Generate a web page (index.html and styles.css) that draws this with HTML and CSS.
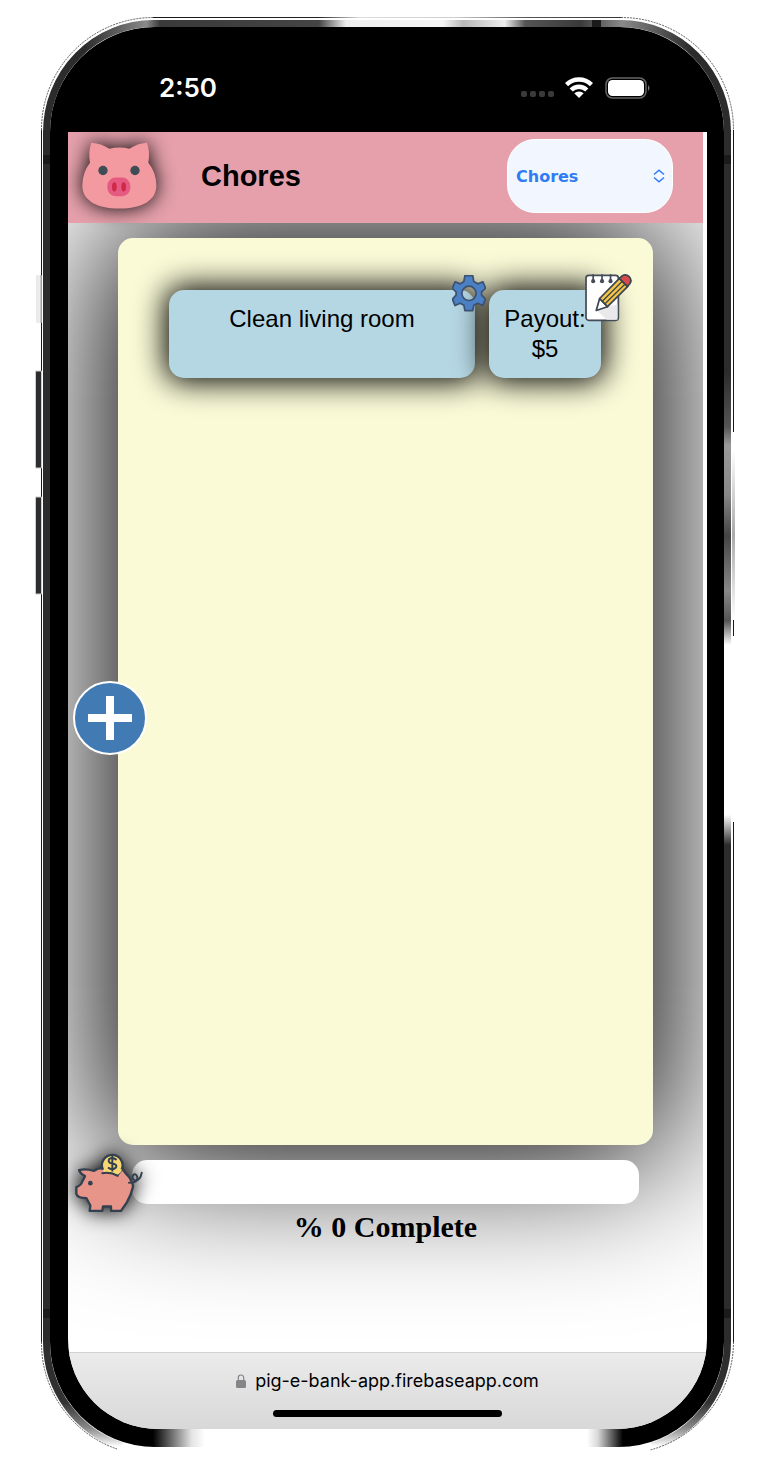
FILE: index.html
```html
<!DOCTYPE html>
<html lang="en">
<head>
<meta charset="utf-8">
<title>Chores</title>
<link rel="stylesheet" href="styles.css">
</head>
<body>
<div class="phone">
  <svg class="phone-frame" viewBox="35 10 704 1449" preserveAspectRatio="none" aria-hidden="true">
    <defs>
      <linearGradient id="topBand" gradientUnits="userSpaceOnUse" x1="43" y1="0" x2="732" y2="0">
        <stop offset="0" stop-color="#2c2c2c"/><stop offset=".06" stop-color="#2c2c2c"/><stop offset=".15" stop-color="#8a8a8a"/><stop offset=".17" stop-color="#3a3a3a"/><stop offset=".4" stop-color="#444"/><stop offset=".44" stop-color="#eee"/><stop offset=".58" stop-color="#f4f4f4"/><stop offset=".61" stop-color="#b8b8b8"/><stop offset=".67" stop-color="#eee"/><stop offset=".7" stop-color="#555"/><stop offset=".78" stop-color="#3a3a3a"/><stop offset=".84" stop-color="#8a8a8a"/><stop offset=".94" stop-color="#2c2c2c"/><stop offset="1" stop-color="#2c2c2c"/>
      </linearGradient>
      <linearGradient id="rightBand" gradientUnits="userSpaceOnUse" x1="0" y1="130" x2="0" y2="1342">
        <stop offset="0" stop-color="#2c2c2c"/><stop offset=".2" stop-color="#2c2c2c"/><stop offset=".245" stop-color="#555"/><stop offset=".26" stop-color="#999"/><stop offset=".3" stop-color="#888"/><stop offset=".335" stop-color="#444"/><stop offset=".38" stop-color="#888"/><stop offset=".405" stop-color="#555"/><stop offset=".425" stop-color="#fff"/><stop offset=".565" stop-color="#fff"/><stop offset=".59" stop-color="#2c2c2c"/><stop offset="1" stop-color="#2c2c2c"/>
      </linearGradient>
      <linearGradient id="lowBand" gradientUnits="userSpaceOnUse" x1="0" y1="1342" x2="0" y2="1452">
        <stop offset="0" stop-color="#2c2c2c"/><stop offset=".55" stop-color="#333"/><stop offset=".78" stop-color="#888"/><stop offset=".95" stop-color="#fff"/>
      </linearGradient>
      <linearGradient id="rimTop" gradientUnits="userSpaceOnUse" x1="41" y1="0" x2="734" y2="0">
        <stop offset="0" stop-color="#111"/><stop offset=".4" stop-color="#222"/><stop offset=".46" stop-color="#ddd"/><stop offset=".6" stop-color="#ccc"/><stop offset=".7" stop-color="#555"/><stop offset="1" stop-color="#111"/>
      </linearGradient>
      <linearGradient id="fadeLeft"><stop offset="0" stop-color="#fff" stop-opacity="0"/><stop offset=".75" stop-color="#fff" stop-opacity=".9"/><stop offset="1" stop-color="#fff"/></linearGradient>
      <linearGradient id="fadeRight"><stop offset="0" stop-color="#fff"/><stop offset=".3" stop-color="#fff" stop-opacity=".85"/><stop offset="1" stop-color="#fff" stop-opacity="0"/></linearGradient>
      <linearGradient id="mute" x1="0" x2="1"><stop offset="0" stop-color="#e8e8e8"/><stop offset=".6" stop-color="#eee"/><stop offset="1" stop-color="#888"/></linearGradient>
      <linearGradient id="sideGlow" x1="0" y1="0" x2="0" y2="1"><stop offset="0" stop-color="#fff"/><stop offset=".5" stop-color="#aaa"/><stop offset="1" stop-color="#fff"/></linearGradient>
    </defs>
    <rect x="50" y="27" width="674" height="1420" rx="105"/>
    <g fill="none" stroke-width="7">
      <path d="M46.500 132V1342" stroke="#2c2c2c"/>
      <path d="M727.500 130V1342.010L727.600 1342" stroke="url(#rightBand)"/>
      <path d="M46.500 132A107 109 0 0 1 153 23.500H621A107 109 0 0 1 727.500 132" stroke="url(#topBand)"/>
      <path d="M46.500 1342A107 109 0 0 0 122 1446M727.500 1342A107 109 0 0 1 652 1446" stroke="url(#lowBand)"/>
    </g>
    <path d="M41.500 130V1342M733.500 130V432M733.500 620V636M733.500 822V1342" fill="none" stroke="#1a1a1a"/>
    <path d="M153 17.500H621" fill="none" stroke="url(#rimTop)"/>
    <path d="M41.500 130A112 112 0 0 1 153 17.500M621 17.500A112 112 0 0 1 733.500 130M41.500 1342A112 112 0 0 0 117 1449M733.500 1342A112 112 0 0 1 650 1450" fill="none" stroke="#333" stroke-width=".8" stroke-dasharray="2 1"/>
    <path d="M43 155h7v9h-7zM43 1309h7v9h-7zM724 155h7v9h-7zM724 1309h7v9h-7zM592 20h9v7h-9z" fill="#1b1b1b"/>
    <rect x="732" y="450" width="3" height="170" fill="url(#sideGlow)"/>
    <rect x="36" y="275" width="6" height="48" rx="1" fill="url(#mute)"/>
    <path d="M35.500 371h6v97h-6zM35.500 497h6v97h-6z" fill="#2b2d2e" stroke="#ccc"/>
    <rect x="153" y="1429" width="52" height="27" fill="url(#fadeLeft)"/>
    <rect x="205" y="1429" width="382" height="27" fill="#fff"/>
    <rect x="587" y="1429" width="36" height="27" fill="url(#fadeRight)"/>
  </svg>

  <div class="status-bar">
    <span class="clock">2:50</span>
    <div class="indicators">
      <svg width="33" height="6" viewBox="0 0 33 6" fill="#3a3a3a" aria-hidden="true"><rect width="6" height="6" rx="2"/><rect x="9" width="6" height="6" rx="2"/><rect x="18" width="6" height="6" rx="2"/><rect x="27" width="6" height="6" rx="2"/></svg>
      <svg class="wifi" width="28" height="21" viewBox="0 0 28 21" fill="none" stroke="#fff" stroke-width="4.500" aria-hidden="true"><path d="M1.500 7.600A18 18 0 0 1 26.500 7.600"/><path d="M6.200 13A11 11 0 0 1 21.800 13"/><path d="M14 21L9.300 16.200A7 7 0 0 1 18.700 16.200Z" fill="#fff" stroke="none"/></svg>
      <svg class="battery" width="46" height="22" viewBox="0 0 46 22" aria-hidden="true"><rect x="1" y="1" width="40" height="20" rx="6.500" fill="none" stroke="#666" stroke-width="1.500"/><rect x="3" y="3" width="36" height="16" rx="4.500" fill="#fff"/><path d="M43 8q3 3 0 6z" fill="#777"/></svg>
    </div>
  </div>

  <div class="screen">
    <div class="app">
      <header class="app-header">
        <svg class="logo" viewBox="0 0 225 200" role="img" aria-label="Pig">
          <path d="M28 2Q58 4 82 20Q112 12 142 20Q166 4 195 2Q205 30 199 62Q223 92 223 130C223 175 180 199 112 199S1 175 1 130Q1 92 24 62Q18 30 28 2Z" fill="#f29a9f"/>
          <circle cx="63" cy="85" r="14" fill="#3f4b55"/><circle cx="159" cy="85" r="14" fill="#3f4b55"/>
          <rect x="76" y="106" width="69" height="56" rx="25" fill="#e65a81"/>
          <ellipse cx="97" cy="134" rx="7" ry="14" fill="#cf2848"/><ellipse cx="125" cy="134" rx="7" ry="14" fill="#cf2848"/>
        </svg>
        <h1 class="title">Chores</h1>
        <div class="page-picker">
          <select class="page-select" aria-label="Page"><option>Chores</option></select>
          <svg class="picker-arrows" viewBox="0 0 12 14" fill="none" stroke="#2f7cf6" stroke-width="1.500" aria-hidden="true"><path d="M1 5.500L6 1.300L11 5.500M1 8.500L6 12.700L11 8.500"/></svg>
        </div>
      </header>

      <main class="content">
        <section class="board">
          <div class="chore">
            <div class="card">Clean living room
              <button class="gear" type="button" aria-label="Chore settings">
                <svg viewBox="0 0 100 107"><path d="M38 2H61L64 19L76 26L91 20L99 39L87 50V59L99 71L90 90L76 83L64 89L61 105H38L35 89L24 83L9 90L1 71L12 59V50L1 39L9 20L24 26L35 19ZM50 33A21 21 0 1 0 50 75A21 21 0 1 0 50 33Z" fill="#4c80c4" fill-rule="evenodd" stroke="#3c5070" stroke-width="5" stroke-linejoin="round"/></svg>
              </button>
            </div>
            <div class="card payout">Payout: $5
              <button class="edit" type="button" aria-label="Edit chore">
                <svg viewBox="0 0 138 140"><rect x="3" y="4" width="95" height="132" rx="8" fill="#fff" stroke="#424b56" stroke-width="5"/><path d="M33 105L64 134H95V90L65 95Z" fill="#e9e9eb"/><path d="M24 1V20M50 1V20M75 1V20" stroke="#424b56" stroke-width="5"/><g fill="#424b56"><circle cx="24" cy="21" r="6"/><circle cx="50" cy="21" r="6"/><circle cx="75" cy="21" r="6"/></g><g stroke="#3c4450" stroke-width="5" stroke-linejoin="round"><path d="M33 107L43 72L66 96Z" fill="#fff"/><path d="M43 72L101 13L125 37L66 96Z" fill="#f5c645"/><path d="M101 13L110 5Q120 -1 130 8Q139 18 132 28L125 37Z" fill="#d84a4a"/><path d="M51 80L109 22M58 88L117 30" fill="none" stroke-width="4"/></g></svg>
              </button>
            </div>
          </div>
        </section>
        <button class="add" type="button" aria-label="Add chore">
          <svg viewBox="0 0 44 44"><path d="M22 0V44M0 22H44" stroke="#fff" stroke-width="8"/></svg>
        </button>
      </main>

      <footer class="savings">
        <div class="progress" role="progressbar" aria-label="Chores complete" aria-valuenow="0"></div>
        <svg class="piggy" viewBox="0 0 204 182" role="img" aria-label="Piggy bank">
          <path d="M12 54Q30 48 57 56Q68 48 84 48L128 68L142 50Q150 62 162 74Q174 92 174 104Q168 130 156 150L138 176H108V163H84L82 176H44L46 160L34 138Q8 138 4 125V105Q18 100 22 88Q28 76 30 72Q16 65 12 54Z" fill="#e79489" stroke="#33404f" stroke-width="7" stroke-linejoin="round"/>
          <path d="M87 60A31 31 0 1 1 137 60L128 68Q108 57 87 60Z" fill="#f7d774"/>
          <path d="M84 53A31 31 0 1 1 140 52" fill="none" stroke="#33404f" stroke-width="7"/>
          <path d="M125 23Q112 13 102 21Q98 32 112 34Q128 37 123 46Q112 56 99 46M112 10V58" fill="none" stroke="#33404f" stroke-width="6"/>
          <path d="M82 63Q108 59 128 71M162 92Q190 92 187 74Q182 62 174 69Q169 82 181 85Q196 85 200 62" fill="none" stroke="#33404f" stroke-width="6" stroke-linecap="round"/>
          <circle cx="46" cy="93" r="7" fill="#33404f"/>
        </svg>
        <p class="complete">% 0 Complete</p>
      </footer>
    </div>

    <div class="browser-bar">
      <div class="address">
        <svg class="lock" viewBox="0 0 10 14" aria-hidden="true"><path d="M2.300 7V4Q2.300 1 5 1T7.700 4V7" fill="none" stroke="#858589" stroke-width="1.200"/><rect y="6" width="10" height="8" rx="1.500" fill="#858589"/></svg>
        <span>pig-e-bank-app.firebaseapp.com</span>
      </div>
      <div class="home-indicator"></div>
    </div>
  </div>
</div>
</body>
</html>
```

FILE: styles.css
```css
* { box-sizing: border-box; }

body {
  margin: 0;
  background: #fff;
  font-family: "Liberation Sans", Arial, sans-serif;
  color: #000;
}

button {
  padding: 0;
  border: 0;
  background: none;
  cursor: pointer;
}

svg { display: block; }

.phone {
  position: relative;
  margin: 10px 21px 15px 35px;
  padding: 17px 32px 30px 33px;
}

.phone-frame {
  position: absolute;
  inset: 0;
  width: 100%;
  height: 100%;
}

.status-bar {
  position: relative;
  display: flex;
  align-items: center;
  justify-content: space-between;
  height: 105px;
  padding: 16px 56px 0 91px;
  color: #fff;
}

.clock {
  font: 600 26px/32px Inter, sans-serif;
}

.indicators {
  display: flex;
  align-items: center;
}

.indicators > :first-child { margin-top: 12px; }
.wifi { margin-left: 11px; }
.battery { margin-left: 12px; }

.screen {
  position: relative;
  overflow: hidden;
  border-radius: 0 0 90px 90px;
  background: #fff;
}

.app {
  overflow: hidden;
  margin-right: 4px;
  padding-bottom: 107px;
}

.app-header {
  position: relative;
  z-index: 1;
  display: flex;
  align-items: center;
  height: 91px;
  padding: 0 30px 4px 14px;
  background: #e5a0ab;
}

.logo {
  width: 75px;
  height: 67px;
  filter: drop-shadow(0 0 10px #000);
}

.title {
  margin: 0 0 0 44px;
  font-size: 29px;
  line-height: 36px;
}

.page-picker {
  position: relative;
  margin-left: auto;
}

.page-select {
  display: block;
  appearance: none;
  width: 166px;
  height: 74px;
  padding: 2px 8px 0;
  border: 1px solid #fff;
  border-radius: 28px;
  background: #f2f7ff;
  color: #2f7cf6;
  font: bold 16px/24px "DejaVu Sans", Verdana, sans-serif;
}

.picker-arrows {
  position: absolute;
  top: 30px;
  right: 8px;
  width: 12px;
  height: 14px;
  pointer-events: none;
}

.content {
  position: relative;
  padding: 15px 50px 0;
}

.board {
  min-height: 907px;
  padding: 52px 51px;
  border-radius: 15px;
  background: #fafad7;
  box-shadow: 0 0 150px 15px #000;
}

.chore {
  display: grid;
  grid-template-columns: 306px 112px;
  gap: 14px;
}

.card {
  position: relative;
  min-height: 88px;
  padding: 14px 12px;
  border-radius: 15px;
  background: #b5d7e3;
  box-shadow: 0 0 30px 4px #000;
  font-size: 24px;
  line-height: 30px;
  text-align: center;
}

.gear {
  position: absolute;
  top: -15px;
  right: -11px;
  width: 34px;
  height: 37px;
  z-index: 1;
}

.edit {
  position: absolute;
  top: -16px;
  right: -31px;
  width: 47px;
  height: 47px;
}

.add {
  position: absolute;
  top: 458px;
  left: 5px;
  display: grid;
  place-items: center;
  width: 74px;
  height: 74px;
  border: 2px solid #fff;
  border-radius: 50%;
  background: #427ab3;
}

.add svg { width: 44px; height: 44px; }

.savings {
  position: relative;
  padding: 15px 64px 0;
}

.progress {
  height: 44px;
  border-radius: 15px;
  background: #fff;
}

.piggy {
  position: absolute;
  top: 7px;
  left: 7px;
  width: 68px;
  height: 61px;
  filter: drop-shadow(0 0 10px #000);
}

.complete {
  margin: 5px 0 0;
  font: bold 30px/36px "Liberation Serif", serif;
  text-align: center;
}

.browser-bar {
  height: 77px;
  padding-top: 16px;
  border-top: 1px solid #d2d2d2;
  background: linear-gradient(#ebebeb, #d8d8d8);
}

.address {
  display: flex;
  align-items: center;
  justify-content: center;
  gap: 9px;
  font: 18px/24px Inter, sans-serif;
}

.lock { width: 10px; height: 14px; }

.home-indicator {
  width: 229px;
  height: 7px;
  margin: 17px auto 0;
  border-radius: 4px;
  background: #000;
}
```
